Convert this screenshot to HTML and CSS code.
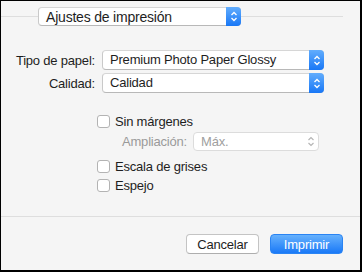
FILE: index.html
```
<!DOCTYPE html>
<html lang="es">
<head>
    <meta charset="UTF-8" />
    <title>Ajustes de impresión</title>
    <link rel="stylesheet" href="styles.css">
</head>
<body>
    <div class="window">
        <div class="top">
            <span class="rule rule-left"></span>
            <div class="popup popup-main">
                <span class="popup-text">Ajustes de impresión</span>
                <span class="arrows">
                    <svg width="8" height="11" viewBox="0 0 8 11"><path d="M1.5 4 L4 1.5 L6.5 4 M1.5 7 L4 9.5 L6.5 7" fill="none" stroke="#fff" stroke-width="1.3"/></svg>
                </span>
            </div>
            <span class="rule rule-right"></span>
        </div>

        <div class="form">
            <label class="label">Tipo de papel:</label>
            <div class="popup">
                <span class="popup-text">Premium Photo Paper Glossy</span>
                <span class="arrows">
                    <svg width="8" height="11" viewBox="0 0 8 11"><path d="M1.5 4 L4 1.5 L6.5 4 M1.5 7 L4 9.5 L6.5 7" fill="none" stroke="#fff" stroke-width="1.3"/></svg>
                </span>
            </div>
            <label class="label">Calidad:</label>
            <div class="popup">
                <span class="popup-text">Calidad</span>
                <span class="arrows">
                    <svg width="8" height="11" viewBox="0 0 8 11"><path d="M1.5 4 L4 1.5 L6.5 4 M1.5 7 L4 9.5 L6.5 7" fill="none" stroke="#fff" stroke-width="1.3"/></svg>
                </span>
            </div>
        </div>

        <div class="options">
            <div class="check"><span class="box"></span>Sin márgenes</div>
            <div class="sub">
                <span class="label-dim">Ampliación:</span>
                <div class="popup popup-dim">
                    <span class="popup-text">Máx.</span>
                    <span class="arrows arrows-dim">
                        <svg width="8" height="11" viewBox="0 0 8 11"><path d="M1.5 4 L4 1.5 L6.5 4 M1.5 7 L4 9.5 L6.5 7" fill="none" stroke="#b5b5b5" stroke-width="1.2"/></svg>
                    </span>
                </div>
            </div>
            <div class="check"><span class="box"></span>Escala de grises</div>
            <div class="check"><span class="box"></span>Espejo</div>
        </div>

        <div class="footer">
            <button class="btn">Cancelar</button>
            <button class="btn btn-primary">Imprimir</button>
        </div>
    </div>
</body>
</html>
```

FILE: styles.css
```
body {
    margin: 0;
    font-family: "Liberation Sans", Arial, sans-serif;
    font-size: 13px;
    letter-spacing: -0.2px;
    color: #1e1e1e;
}
.window {
    box-sizing: border-box;
    width: 362px;
    height: 272px;
    background-color: #f5f5f5;
    border-top: 1px solid #000;
    border-left: 1px solid #000;
    border-right: 2px solid #000;
    border-bottom: 2px solid #000;
    display: flex;
    flex-direction: column;
}
.top {
    display: flex;
    align-items: center;
    height: 31px;
}
.rule {
    height: 1px;
    background-color: #dedede;
}
.rule-left {
    width: 37px;
}
.rule-right {
    flex: 1;
    margin-right: 17px;
}
.popup {
    box-sizing: border-box;
    height: 20px;
    display: flex;
    align-items: stretch;
    background-color: #fff;
    border: 1px solid #c9c9c9;
    border-top-color: #d6d6d6;
    border-bottom-color: #b8b8b8;
    border-radius: 4px;
}
.popup-main {
    width: 203px;
    height: 19px;
    font-size: 14px;
}
.popup-text {
    flex: 1;
    padding-left: 7px;
    line-height: 18px;
    white-space: nowrap;
}
.arrows {
    width: 15px;
    margin: -1px -1px -1px 0;
    border-radius: 0 4px 4px 0;
    background: linear-gradient(#62adfd, #1877f6);
    display: flex;
    align-items: center;
    justify-content: center;
}
.form {
    display: grid;
    grid-template-columns: 95px 222px;
    column-gap: 6px;
    row-gap: 3px;
    margin-top: 18px;
    align-items: center;
}
.label {
    text-align: right;
    padding-right: 1px;
}
.options {
    display: flex;
    flex-direction: column;
    margin-top: 19px;
    margin-left: 96px;
}
.check {
    display: flex;
    align-items: center;
    height: 19px;
}
.box {
    box-sizing: border-box;
    width: 13px;
    height: 13px;
    margin-right: 5px;
    background-color: #fff;
    border: 1px solid #b3b3b3;
    border-radius: 3px;
}
.sub {
    display: flex;
    align-items: center;
    margin: 1px 0 6px 25px;
}
.label-dim {
    color: #9a9a9a;
    margin-right: 6px;
}
.popup-dim {
    width: 126px;
    height: 19px;
    border-color: #dcdcdc;
    color: #a0a0a0;
}
.arrows-dim {
    background: none;
    margin: 0;
}
.footer {
    margin-top: auto;
    height: 54px;
    border-top: 1px solid #dedede;
    display: flex;
    justify-content: flex-end;
    align-items: flex-start;
    gap: 11px;
    padding: 17px 17px 0 0;
    box-sizing: border-box;
}
.btn {
    font-family: inherit;
    font-size: 13px;
    letter-spacing: -0.2px;
    width: 73px;
    height: 20px;
    padding: 0;
    color: #1e1e1e;
    background-color: #fff;
    border: 1px solid #c4c4c4;
    border-bottom-color: #aeaeae;
    border-radius: 4px;
}
.btn-primary {
    color: #fff;
    background: linear-gradient(#66b1fd, #1a79f7);
    border-color: #2a84f3;
}
```
